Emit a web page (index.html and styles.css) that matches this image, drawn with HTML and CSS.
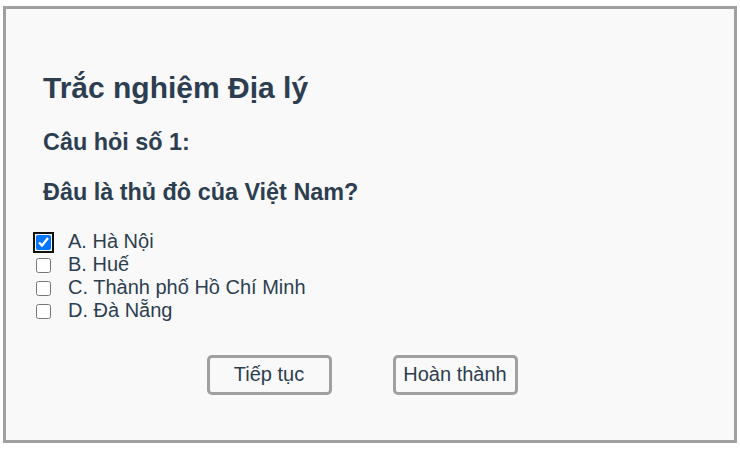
FILE: index.html
```html
<!DOCTYPE html>
<html lang="vi">
<head>
<meta charset="utf-8">
<link rel="stylesheet" href="styles.css">
</head>
<body>
<div class="quiz">
  <h2 class="title">Trắc nghiệm Địa lý</h2>
  <h3 class="q-num">Câu hỏi số 1:</h3>
  <h3 class="q-text">Đâu là thủ đô của Việt Nam?</h3>
  <div class="options">
    <label class="option"><input type="checkbox" class="focused" checked><span>A. Hà Nội</span></label>
    <label class="option"><input type="checkbox"><span>B. Huế</span></label>
    <label class="option"><input type="checkbox"><span>C. Thành phố Hồ Chí Minh</span></label>
    <label class="option"><input type="checkbox"><span>D. Đà Nẵng</span></label>
  </div>
  <div class="actions">
    <button class="btn">Tiếp tục</button>
    <button class="btn">Hoàn thành</button>
  </div>
</div>
</body>
</html>
```

FILE: styles.css
```css
html, body {
  margin: 0;
  padding: 0;
  background: #ffffff;
}

body {
  font-family: "Liberation Sans", Arial, sans-serif;
  font-size: 20px;
  color: #2c3e50;
}

.quiz {
  margin: 6px 3px;
  height: 437px;
  box-sizing: border-box;
  border: 3px solid #a0a0a0;
  background: #f9f9f9;
  padding: 37px 30px 0 30px;
}

.title {
  font-size: 30px;
  font-weight: bold;
  margin: 25px 0 24px 7px;
}

.q-num,
.q-text {
  font-size: 23.4px;
  font-weight: bold;
  margin: 23.4px 0 23.4px 7px;
}

.q-num {
  margin-top: 0;
}

.options {
  display: flex;
  flex-direction: column;
}

.option {
  display: flex;
  align-items: center;
  height: 23px;
  line-height: 23px;
}

.option input {
  width: 15px;
  height: 15px;
  margin: 2px 17px 0 0;
}

.option input.focused {
  outline: 2px solid #101010;
  outline-offset: 1px;
  border-radius: 3px;
}

.actions {
  display: flex;
  justify-content: center;
  gap: 61px;
  margin-top: 33px;
  padding-right: 16px;
}

.btn {
  width: 125px;
  height: 40px;
  box-sizing: border-box;
  border: 3px solid #a0a0a0;
  border-radius: 5px;
  background: transparent;
  font-family: inherit;
  font-size: 20px;
  color: #2c3e50;
  padding: 0;
}
```
